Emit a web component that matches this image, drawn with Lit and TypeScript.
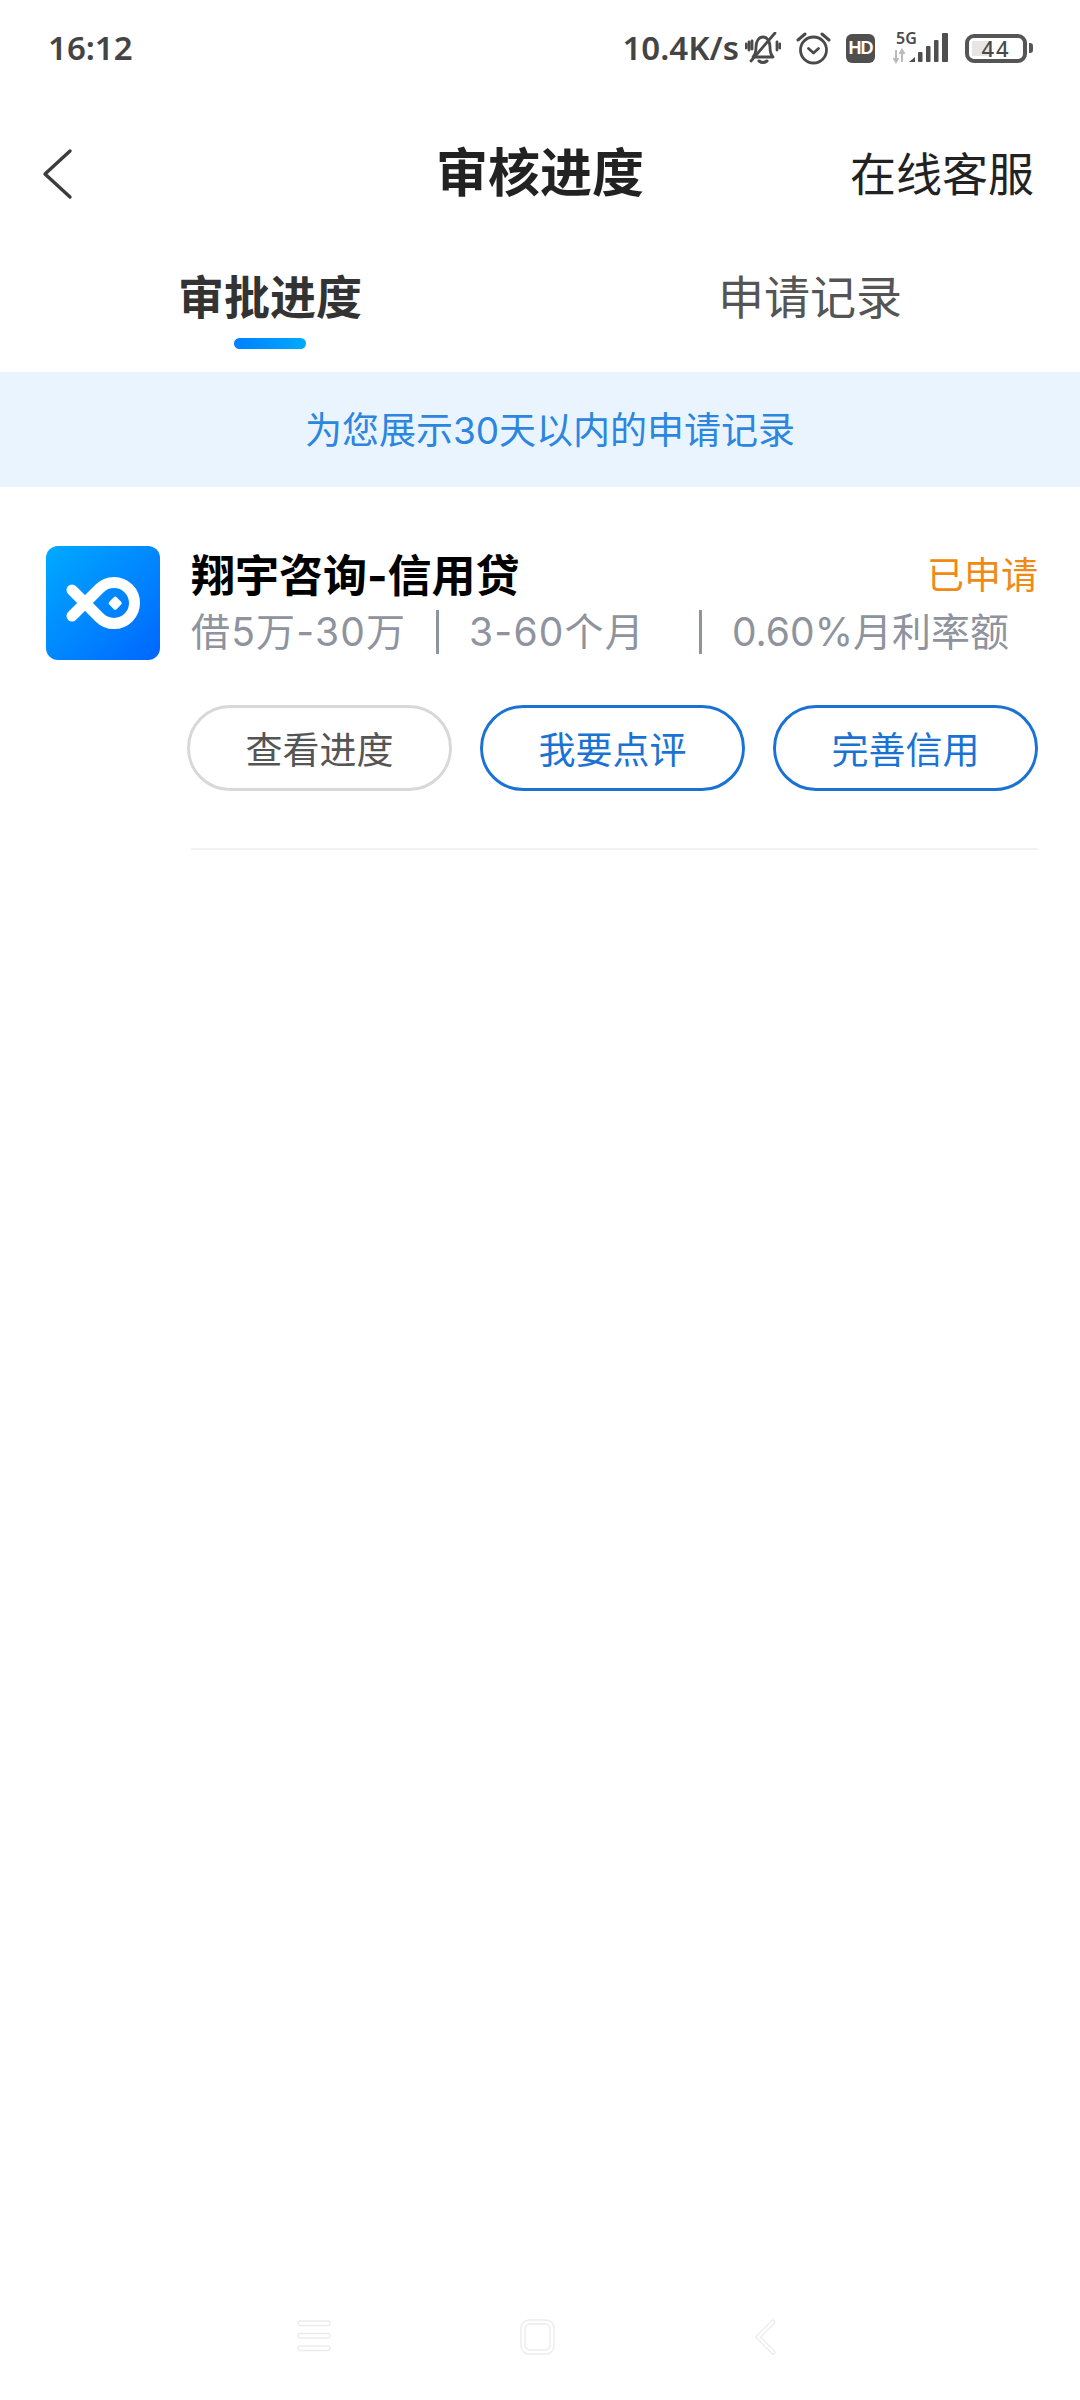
import { LitElement, html, css } from "lit";
import { customElement } from "lit/decorators.js";

@customElement("app-root")
export class AppRoot extends LitElement {
  static styles = css`
    :host {
      display: flex;
      flex-direction: column;
      width: 1080px;
      height: 2400px;
      background: #fff;
      font-family: "Inter", "Noto Sans CJK SC", "Noto Sans", sans-serif;
      color: #222;
    }
    .status {
      height: 96px;
      display: flex;
      align-items: center;
      padding: 0 48px;
      box-sizing: border-box;
      color: #444;
    }
    .time, .speed {
      font-family: "Noto Sans", sans-serif;
      font-weight: 600;
      font-size: 33px;
      line-height: 40px;
    }
    .spacer { flex: 1; }
    .speed { margin-right: 6px; }
    .status-icons { display: flex; align-items: center; }
    .status-icons svg { display: block; }
    .alarm { margin-left: 15px; }
    .hd {
      margin-left: 15px;
      width: 29px;
      height: 29px;
      border-radius: 6px;
      background: #4f4f4f;
      color: #fff;
      font-family: "Liberation Sans", sans-serif;
      font-weight: 700;
      font-size: 18px;
      letter-spacing: -1px;
      display: flex;
      align-items: center;
      justify-content: center;
    }
    .net { margin-left: 18px; position: relative; }
    .five-g {
      position: absolute;
      left: 3px;
      top: -1px;
      font-family: "Noto Sans", sans-serif;
      font-size: 16px;
      font-weight: 600;
      line-height: 14px;
      color: #4a4a4a;
    }
    .battery { margin-left: 15px; display: flex; align-items: center; gap: 2px; margin-right: -1px; }
    .cell {
      width: 62px;
      height: 29px;
      box-sizing: border-box;
      border: 4px solid #555;
      border-radius: 9px;
      display: flex;
      align-items: center;
      justify-content: center;
      background: linear-gradient(#e6e6e6, #e6e6e6) no-repeat 3px 3px / 20px 15px;
      font-family: "Noto Sans", sans-serif;
      font-size: 22px;
      font-weight: 500;
      letter-spacing: 2px;
      color: #4a4a4a;
      line-height: 1;
    }
    .nub { width: 4px; height: 10px; background: #555; border-radius: 0 3px 3px 0; }

    .nav {
      height: 155px;
      padding: 0 46px 3px;
      display: grid;
      grid-template-columns: 1fr auto 1fr;
      align-items: center;
    }
    .nav svg { display: block; margin-left: -4px; }
    .title { font-size: 52px; font-weight: 700; color: #222; line-height: 64px; }
    .link { justify-self: end; font-size: 46px; color: #222; line-height: 60px; }

    .tabs { height: 118px; display: grid; grid-template-columns: 1fr 1fr; }
    .tab {
      display: flex;
      flex-direction: column;
      align-items: center;
      padding-top: 17px;
      font-size: 46px;
      line-height: 52px;
      color: #555;
    }
    .tab.on { font-weight: 700; color: #333; }
    .bar {
      margin-top: 15px;
      width: 72px;
      height: 11px;
      border-radius: 6px;
      background: linear-gradient(90deg, #0080ff, #00aaff);
    }

    .banner {
      height: 115px;
      padding: 0 0 3px 20px;
      box-sizing: border-box;
      display: flex;
      align-items: center;
      justify-content: center;
      background: #e9f4fe;
      color: #2c86e0;
      font-size: 37px;
    }

    .body { flex: 1; }
    .card { display: flex; gap: 31px; padding: 59px 42px 0 46px; }
    .logo {
      flex: none;
      width: 114px;
      height: 114px;
      border-radius: 12px;
      background: linear-gradient(135deg, #00aaff, #0066ff);
    }
    .logo svg { display: block; }
    .info { flex: 1; min-width: 0; }
    .head { display: flex; justify-content: space-between; align-items: center; height: 56px; margin-top: -1px; }
    .name { font-size: 44px; font-weight: 700; color: #000; }
    .state { font-size: 37px; color: #ef8a17; }
    .terms {
      display: grid;
      grid-template-columns: 245px 263px 1fr;
      margin-top: 9px;
      font-size: 39px;
      color: #8e939e;
      line-height: 44px;
    }
    .terms .wide { letter-spacing: 1.2px; }
    .terms div + div { border-left: 3px solid #8e939e; padding-left: 30px; }
    .actions {
      display: grid;
      grid-template-columns: repeat(3, 1fr);
      gap: 28px;
      margin: 51px 0 0 -4px;
    }
    .btn {
      height: 86px;
      box-sizing: border-box;
      border: 3px solid #1a73d4;
      border-radius: 43px;
      display: flex;
      align-items: center;
      justify-content: center;
      font-size: 37px;
      color: #1a73d4;
    }
    .btn.plain { border-color: #d8d8d8; color: #555; }
    .rule { height: 2px; background: #f2f2f2; margin: 57px 42px 0 191px; }

    .sysnav {
      height: 81px;
      display: grid;
      grid-template-columns: 520px 235px 1fr;
      align-items: start;
    }
    .sysnav svg { display: block; }
    .sysnav div { display: flex; }
    .sys-a { padding-left: 297px; }
  `;

  render() {
    return html`
      <div class="status">
        <span class="time">16:12</span>
        <span class="spacer"></span>
        <span class="speed">10.4K/s</span>
        <div class="status-icons">
          <svg width="36" height="33" viewBox="0 0 36 33" fill="none" stroke="#4a4a4a" stroke-width="2.8" stroke-linecap="round" stroke-linejoin="round">
            <path d="M8 25 C11 22 11 19 11 15 C11 9 14 5 18 5 C22 5 25 9 25 15 C25 19 25 22 28 25 Z"/>
            <path d="M14 29 Q18 32 22 29" stroke-width="3"/>
            <path d="M30 1 L6 29"/>
            <path d="M4 10 V18 M1 12 V16 M32 10 V18 M35 12 V16 M7 9 V17"/>
          </svg>
          <svg class="alarm" width="35" height="34" viewBox="0 0 35 34" fill="none" stroke="#4a4a4a" stroke-linecap="round" stroke-linejoin="round">
            <circle cx="17.5" cy="19" r="13" stroke-width="2.8"/>
            <path d="M12.5 17.5 L17.5 22 L22.5 17.5" stroke-width="2.8"/>
            <path d="M2 9 L9 3 M33 9 L26 3" stroke-width="3"/>
          </svg>
          <div class="hd">HD</div>
          <div class="net">
            <span class="five-g">5G</span>
            <svg width="57" height="32" viewBox="0 0 57 32">
              <path d="M3 18 V29 M0.5 26 L3 30 L5.5 26 M9 30 V19 M6.5 22 L9 18 L11.5 22" fill="none" stroke="#bbb" stroke-width="2"/>
              <path d="M16 30 L22 25 V30 Z" fill="#4f4f4f"/>
              <rect x="25" y="20" width="4.5" height="10" rx="1" fill="#4f4f4f"/>
              <rect x="33" y="14" width="4.5" height="16" rx="1" fill="#4f4f4f"/>
              <rect x="41" y="8" width="4.5" height="22" rx="1" fill="#4f4f4f"/>
              <rect x="49" y="1" width="6" height="29" rx="1" fill="#4f4f4f"/>
            </svg>
          </div>
          <div class="battery">
            <div class="cell">44</div>
            <div class="nub"></div>
          </div>
        </div>
      </div>

      <div class="nav">
        <svg width="32" height="52" viewBox="0 0 32 52" fill="none" stroke="#3c3c3c" stroke-width="3.4" stroke-linecap="round" stroke-linejoin="round">
          <path d="M28 3 L3 26 L28 49"/>
        </svg>
        <div class="title">审核进度</div>
        <div class="link">在线客服</div>
      </div>

      <div class="tabs">
        <div class="tab on">审批进度<span class="bar"></span></div>
        <div class="tab">申请记录</div>
      </div>

      <div class="banner">为您展示30天以内的申请记录</div>

      <div class="body">
        <div class="card">
          <div class="logo">
            <svg width="114" height="114" viewBox="0 0 114 114">
              <path d="M26 44 L53.5 71.5 A20.5 20.5 0 1 0 53.5 42.5 L26 70" fill="none" stroke="#fff" stroke-width="11" stroke-linecap="round" stroke-linejoin="round"/>
              <rect x="64" y="52" width="10.4" height="10.4" rx="2" transform="rotate(45 69.2 57.2)" fill="#fff"/>
            </svg>
          </div>
          <div class="info">
            <div class="head">
              <span class="name">翔宇咨询-信用贷</span>
              <span class="state">已申请</span>
            </div>
            <div class="terms">
              <div class="wide">借5万-30万</div>
              <div class="wide">3-60个月</div>
              <div>0.60%月利率额</div>
            </div>
            <div class="actions">
              <div class="btn plain">查看进度</div>
              <div class="btn">我要点评</div>
              <div class="btn">完善信用</div>
            </div>
          </div>
        </div>
        <div class="rule"></div>
      </div>

      <div class="sysnav">
        <div class="sys-a">
          <svg width="34" height="34" viewBox="0 0 34 34" fill="#fff" stroke="#ececec" stroke-width="1.4">
            <rect x="1" y="2" width="32" height="4.5" rx="2.2"/>
            <rect x="1" y="14.5" width="32" height="4.5" rx="2.2"/>
            <rect x="1" y="27" width="32" height="4.5" rx="2.2"/>
          </svg>
        </div>
        <div>
          <svg width="36" height="36" viewBox="0 0 36 36" fill="none" stroke="#ececec" stroke-width="1.4">
            <rect x="1" y="1" width="33" height="34" rx="8"/>
            <rect x="5" y="5" width="25" height="26" rx="5"/>
          </svg>
        </div>
        <div>
          <svg width="22" height="36" viewBox="0 0 22 36" fill="none" stroke-linecap="round" stroke-linejoin="round">
            <path d="M18 3 L3 18 L18 33" stroke="#ececec" stroke-width="5"/>
            <path d="M18 3 L3 18 L18 33" stroke="#fff" stroke-width="2.4"/>
          </svg>
        </div>
      </div>
    `;
  }
}
